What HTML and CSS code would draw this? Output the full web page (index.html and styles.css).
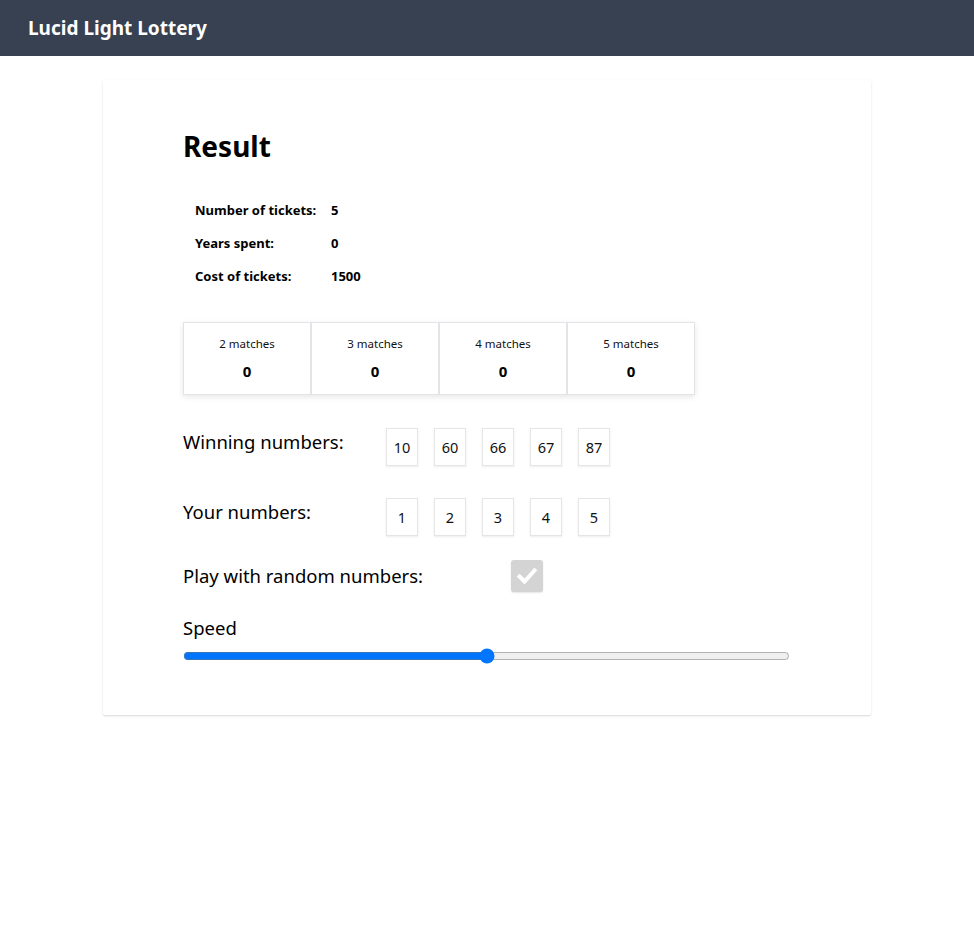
FILE: index.html
```html
<!DOCTYPE html>
<html lang="en">
<head>
<meta charset="utf-8">
<title>Lucid Light Lottery</title>
<link rel="stylesheet" href="styles.css">
</head>
<body>
<header class="topbar">
  <div class="brand">Lucid Light Lottery</div>
</header>
<main class="page">
  <section class="card">
    <h1 class="title">Result</h1>
    <div class="stats">
      <div class="stat-label">Number of tickets:</div><div class="stat-value">5</div>
      <div class="stat-label">Years spent:</div><div class="stat-value">0</div>
      <div class="stat-label">Cost of tickets:</div><div class="stat-value">1500</div>
    </div>
    <div class="matches">
      <div class="match"><div class="match-label">2 matches</div><div class="match-value">0</div></div>
      <div class="match"><div class="match-label">3 matches</div><div class="match-value">0</div></div>
      <div class="match"><div class="match-label">4 matches</div><div class="match-value">0</div></div>
      <div class="match"><div class="match-label">5 matches</div><div class="match-value">0</div></div>
    </div>
    <div class="num-row">
      <div class="row-label">Winning numbers:</div>
      <div class="balls">
        <div class="ball">10</div><div class="ball">60</div><div class="ball">66</div><div class="ball">67</div><div class="ball">87</div>
      </div>
    </div>
    <div class="num-row second">
      <div class="row-label">Your numbers:</div>
      <div class="balls">
        <div class="ball">1</div><div class="ball">2</div><div class="ball">3</div><div class="ball">4</div><div class="ball">5</div>
      </div>
    </div>
    <div class="random-row">
      <div class="row-label random-label">Play with random numbers:</div>
      <div class="check">
        <svg width="32" height="32" viewBox="0 0 32 32"><path d="M8.5 16.5l5 5 10-11" fill="none" stroke="#fff" stroke-width="4" stroke-linecap="square"/></svg>
      </div>
    </div>
    <div class="speed">
      <div class="row-label">Speed</div>
      <input class="slider" type="range" min="0" max="100" value="50">
    </div>
  </section>
</main>
</body>
</html>
```
FILE: styles.css
```css
html, body {
  margin: 0;
  padding: 0;
  background: #fff;
  font-family: "Noto Sans", "Open Sans", sans-serif;
  color: #000;
}
.topbar {
  background: #374151;
  height: 56px;
  display: flex;
  align-items: center;
  padding: 0 28px;
}
.brand {
  color: #fff;
  font-weight: 700;
  font-size: 19px;
}
.page {
  display: flex;
  justify-content: center;
  padding-top: 24px;
  padding-bottom: 24px;
}
.card {
  width: 768px;
  box-sizing: border-box;
  padding: 44px 80px 51px;
  background: #fff;
  box-shadow: 0 1px 3px rgba(0,0,0,0.1), 0 1px 1px rgba(0,0,0,0.06);
  border-radius: 2px;
}
.title {
  margin: 0;
  font-size: 28px;
  line-height: 44px;
  font-weight: 700;
}
.stats {
  margin-top: 25px;
  padding-left: 12px;
  display: grid;
  grid-template-columns: 136px auto;
  grid-auto-rows: 33px;
  align-items: center;
  font-size: 13px;
  font-weight: 700;
}
.matches {
  margin-top: 30px;
  display: flex;
  width: 512px;
  box-shadow: 0 2px 6px rgba(0,0,0,0.1);
}
.match {
  width: 128px;
  height: 73px;
  box-sizing: border-box;
  border: 1px solid #e3e3e8;
  display: flex;
  flex-direction: column;
  align-items: center;
  padding-top: 13px;
}
.match-label {
  font-size: 11.5px;
  line-height: 16px;
  color: #111;
}
.match-value {
  margin-top: 9px;
  font-size: 15px;
  font-weight: 700;
  line-height: 20px;
}
.num-row {
  margin-top: 33px;
  display: flex;
  align-items: flex-start;
}
.num-row.second {
  margin-top: 32px;
}
.row-label {
  font-size: 18.5px;
  line-height: 28px;
}
.num-row .row-label {
  width: 203px;
}
.balls {
  display: flex;
  gap: 16px;
}
.ball {
  width: 32px;
  height: 38px;
  box-sizing: border-box;
  border: 1px solid #e5e5e5;
  box-shadow: 0 1px 2px rgba(0,0,0,0.08);
  display: flex;
  align-items: center;
  justify-content: center;
  font-size: 14.5px;
  color: #111;
}
.random-row {
  margin-top: 24px;
  display: flex;
  align-items: center;
}
.random-label {
  width: 328px;
}
.check {
  width: 32px;
  height: 32px;
  background: #d4d4d4;
  border-radius: 3px;
  box-shadow: 0 1px 2px rgba(0,0,0,0.1);
}
.check svg {
  display: block;
}
.speed {
  margin-top: 22px;
}
.slider {
  display: block;
  margin: 6px 0 0;
  width: 607px;
}
```
